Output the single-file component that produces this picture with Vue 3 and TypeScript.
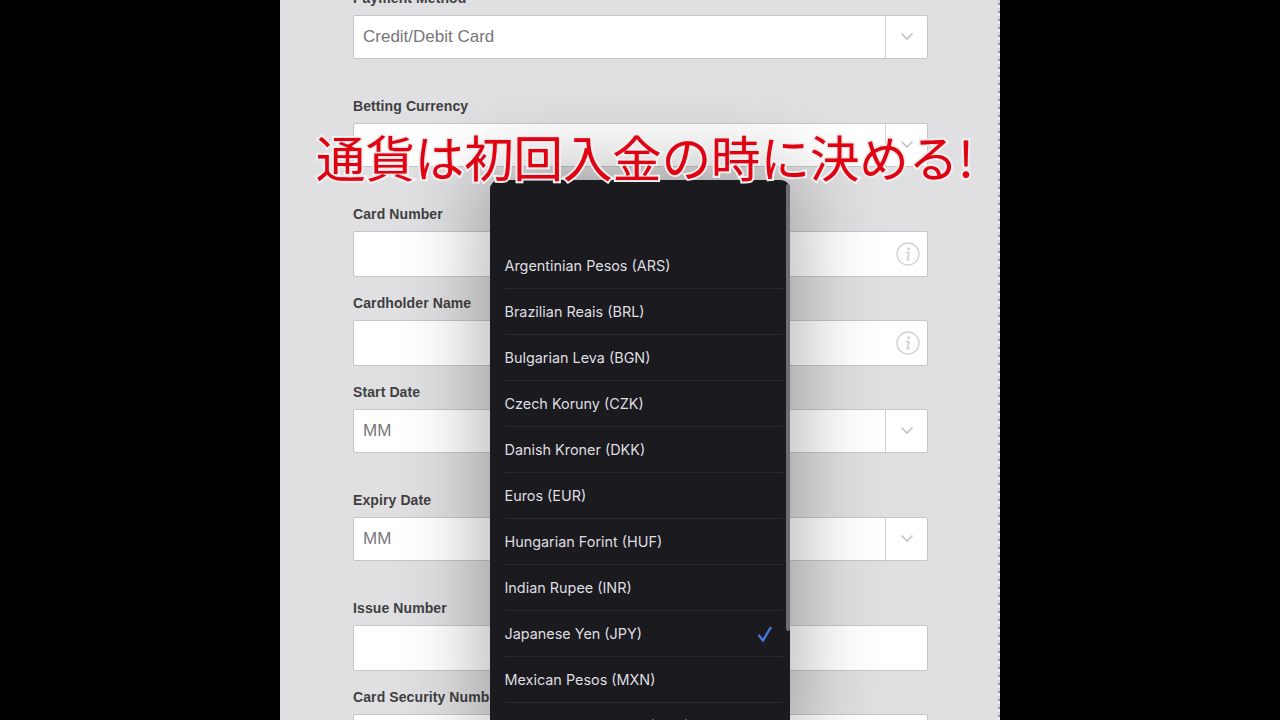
<template>
  <div class="screen">
    <div class="page">
      <form class="form">
        <div v-for="field in fields" :key="field.label" class="field" :class="field.kind">
          <label>{{ field.label }}</label>
          <div class="box">
            <span class="value">{{ field.value }}</span>
            <span v-if="field.kind === 'select'" class="arrow">
              <svg width="14" height="9" viewBox="0 0 14 9"><path d="M1.5 1.5 7 7l5.5-5.5" fill="none" stroke="#c4c3c6" stroke-width="1.6" /></svg>
            </span>
            <svg v-if="field.info" class="info" width="24" height="24" viewBox="0 0 24 24">
              <circle cx="12" cy="12" r="11" fill="none" stroke="#d3d2d5" stroke-width="1.4" />
              <circle cx="12.6" cy="6.8" r="1.5" fill="#d3d2d5" />
              <path d="M9.8 10.6h3.2l-1.6 7h2.4" fill="none" stroke="#d3d2d5" stroke-width="1.8" />
            </svg>
          </div>
        </div>
      </form>

      <div class="menu">
        <ul>
          <li v-for="item in currencies" :key="item">
            <span>{{ item }}</span>
            <svg v-if="item === selected" width="18" height="18" viewBox="0 0 18 18"><path d="M2.5 10 7 15.5 15 2" fill="none" stroke="#4a78dc" stroke-width="2.4" /></svg>
          </li>
          <li class="faded"><span>New Zealand Dollars (NZD)</span></li>
        </ul>
        <div class="scrollbar"></div>
      </div>

      <div class="caption">通貨は初回入金の時に決める!</div>
      <div class="edge"></div>
    </div>
  </div>
</template>

<script setup lang="ts">
interface Field {
  label: string
  kind: 'select' | 'input'
  value?: string
  info?: boolean
}

const fields: Field[] = [
  { label: 'Payment Method', kind: 'select', value: 'Credit/Debit Card' },
  { label: 'Betting Currency', kind: 'select' },
  { label: 'Card Number', kind: 'input', info: true },
  { label: 'Cardholder Name', kind: 'input', info: true },
  { label: 'Start Date', kind: 'select', value: 'MM' },
  { label: 'Expiry Date', kind: 'select', value: 'MM' },
  { label: 'Issue Number', kind: 'input' },
  { label: 'Card Security Number', kind: 'input' },
]

const currencies = [
  'Argentinian Pesos (ARS)',
  'Brazilian Reais (BRL)',
  'Bulgarian Leva (BGN)',
  'Czech Koruny (CZK)',
  'Danish Kroner (DKK)',
  'Euros (EUR)',
  'Hungarian Forint (HUF)',
  'Indian Rupee (INR)',
  'Japanese Yen (JPY)',
  'Mexican Pesos (MXN)',
]
const selected = 'Japanese Yen (JPY)'
</script>

<style>
html,
body {
  margin: 0;
  background: #000;
}
</style>

<style scoped>
.screen {
  width: 1280px;
  height: 720px;
  background: #000;
  display: flex;
  justify-content: center;
  overflow: hidden;
}

.page {
  position: relative;
  width: 720px;
  height: 720px;
  background: #e0dfe1;
  overflow: hidden;
  font-family: "Liberation Sans", Arial, sans-serif;
}

.form {
  margin: -11px 72px 0 73px;
}

.field label {
  display: block;
  height: 18px;
  line-height: 18px;
  margin-bottom: 8px;
  font-size: 14px;
  font-weight: 700;
  letter-spacing: 0.1px;
  color: #3f3f42;
}

.box {
  display: flex;
  align-items: center;
  box-sizing: border-box;
  background: #fff;
  border: 1px solid #c6c5c8;
  border-radius: 2px;
}

.select {
  margin-bottom: 38.5px;
}

.select .box {
  height: 43.5px;
}

.input {
  margin-bottom: 17.5px;
}

.input .box {
  height: 45.5px;
}

.value {
  flex: 1;
  padding-left: 9px;
  font-size: 17px;
  color: #77767a;
}

.arrow {
  display: flex;
  align-items: center;
  justify-content: center;
  width: 41px;
  height: 100%;
  border-left: 1px solid #d2d1d4;
}

.info {
  margin-right: 7px;
}

.menu {
  position: absolute;
  left: 210px;
  top: 180px;
  width: 300px;
  height: 560px;
  box-sizing: border-box;
  padding-top: 63px;
  background: #1b1a1e;
  border-radius: 9px;
  box-shadow: 0 0 80px 10px rgba(0, 0, 0, 0.3);
  font-family: Inter, "Liberation Sans", sans-serif;
}

.menu ul {
  list-style: none;
  margin: 0;
  padding: 0 7px 0 14.5px;
}

.menu li {
  display: flex;
  align-items: center;
  justify-content: space-between;
  box-sizing: border-box;
  height: 46px;
  padding-right: 9px;
  border-bottom: 1px solid #2a292e;
  font-size: 14.4px;
  color: #dfdee1;
}

.menu li.faded {
  color: #77767a;
}

.scrollbar {
  position: absolute;
  right: 0;
  top: 4px;
  width: 4px;
  height: 447px;
  border-radius: 2px;
  background: #6f6e73;
}

.caption {
  position: absolute;
  left: 36px;
  top: 122px;
  white-space: nowrap;
  font-family: "Noto Sans CJK JP", sans-serif;
  font-size: 49.4px;
  font-weight: 400;
  line-height: 68px;
  color: #e30011;
  -webkit-text-stroke: 4px #f6f5f6;
  paint-order: stroke fill;
  text-shadow: 0 0 2px rgba(0, 0, 0, 0.3);
}

/* video noise on the right edge of the frame */
.edge {
  position: absolute;
  right: 0;
  top: 0;
  width: 2px;
  height: 720px;
  background: repeating-linear-gradient(180deg, #dcc4ea 0 3px, #a793b4 3px 5px, #efe4f4 5px 8px);
}
</style>
